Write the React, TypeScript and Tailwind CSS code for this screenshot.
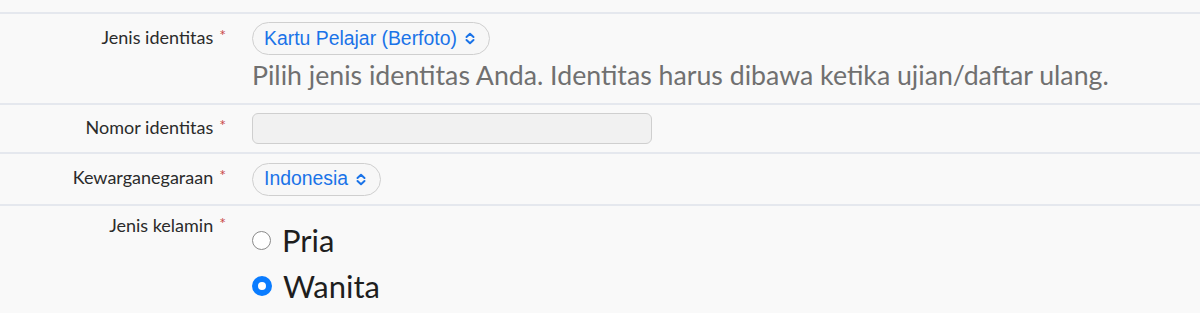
import React from 'react';

const Chevron = () => (
  <svg className="ml-[7px] w-[12px] h-[13px]" viewBox="0 0 12 13" fill="none" stroke="#1a73e8" strokeWidth={2} strokeLinecap="round" strokeLinejoin="round">
    <path d="M2.5 5L6 1.8L9.5 5" />
    <path d="M2.5 8L6 11.2L9.5 8" />
  </svg>
);

const Label = ({ children, className = '' }: { children: React.ReactNode; className?: string }) => (
  <div className={`w-[252px] shrink-0 pr-[26px] text-right text-[18px] text-[#2b2b2b] leading-none ${className}`}>
    {children}
    <span className="text-[#c94a4a] ml-[6px] text-[16px] relative -top-[3px]">*</span>
  </div>
);

const SelectPill = ({ value }: { value: string }) => (
  <div className="inline-flex items-center h-[33px] pl-[11px] pr-[13px] rounded-full border border-[#cfcfcf] bg-[#f7f7f7] text-[19.4px] text-[#1a73e8] font-['Liberation_Sans',Arial,sans-serif]">
    {value}
    <Chevron />
  </div>
);

const App = () => {
  return (
    <div className="w-[1200px] h-[313px] overflow-hidden bg-[#f9f9f9] font-['Lato',sans-serif]">
      <div className="h-[14px] border-b-2 border-[#e5e8ee]" />

      {/* Jenis identitas */}
      <div className="flex h-[91px] border-b-2 border-[#e5e8ee] pt-[8px]">
        <div className="pt-[6px]">
          <Label>Jenis identitas</Label>
        </div>
        <div className="flex flex-col">
          <div>
            <SelectPill value="Kartu Pelajar (Berfoto)" />
          </div>
          <p className="mt-[3px] text-[26.7px] leading-[34px] text-[#707070]">
            Pilih jenis identitas Anda. Identitas harus dibawa ketika ujian/daftar ulang.
          </p>
        </div>
      </div>

      {/* Nomor identitas */}
      <div className="flex items-center h-[49px] border-b-2 border-[#e5e8ee]">
        <Label className="mb-[4px]">Nomor identitas</Label>
        <input
          type="text"
          className="w-[400px] h-[31px] rounded-[6px] border border-[#cfcfcf] bg-[#f1f1f1] outline-none"
        />
      </div>

      {/* Kewarganegaraan */}
      <div className="flex items-center h-[52px] border-b-2 border-[#e5e8ee]">
        <Label className="mb-[4px]">Kewarganegaraan</Label>
        <SelectPill value="Indonesia" />
      </div>

      {/* Jenis kelamin */}
      <div className="flex pt-[10px]">
        <Label>Jenis kelamin</Label>
        <div className="flex flex-col gap-[10px] pt-[6px]">
          <label className="flex items-center gap-[11px] text-[31px] leading-[36px] text-[#1e1e1e]">
            <span className="w-[19px] h-[19px] rounded-full border-[1.5px] border-[#8a8a8a] bg-white" />
            Pria
          </label>
          <label className="flex items-center gap-[11px] text-[31px] leading-[36px] text-[#1e1e1e]">
            <span className="w-[20px] h-[20px] rounded-full border-[6px] border-[#0a7cff] bg-white" />
            Wanita
          </label>
        </div>
      </div>
    </div>
  );
};

export default App;
